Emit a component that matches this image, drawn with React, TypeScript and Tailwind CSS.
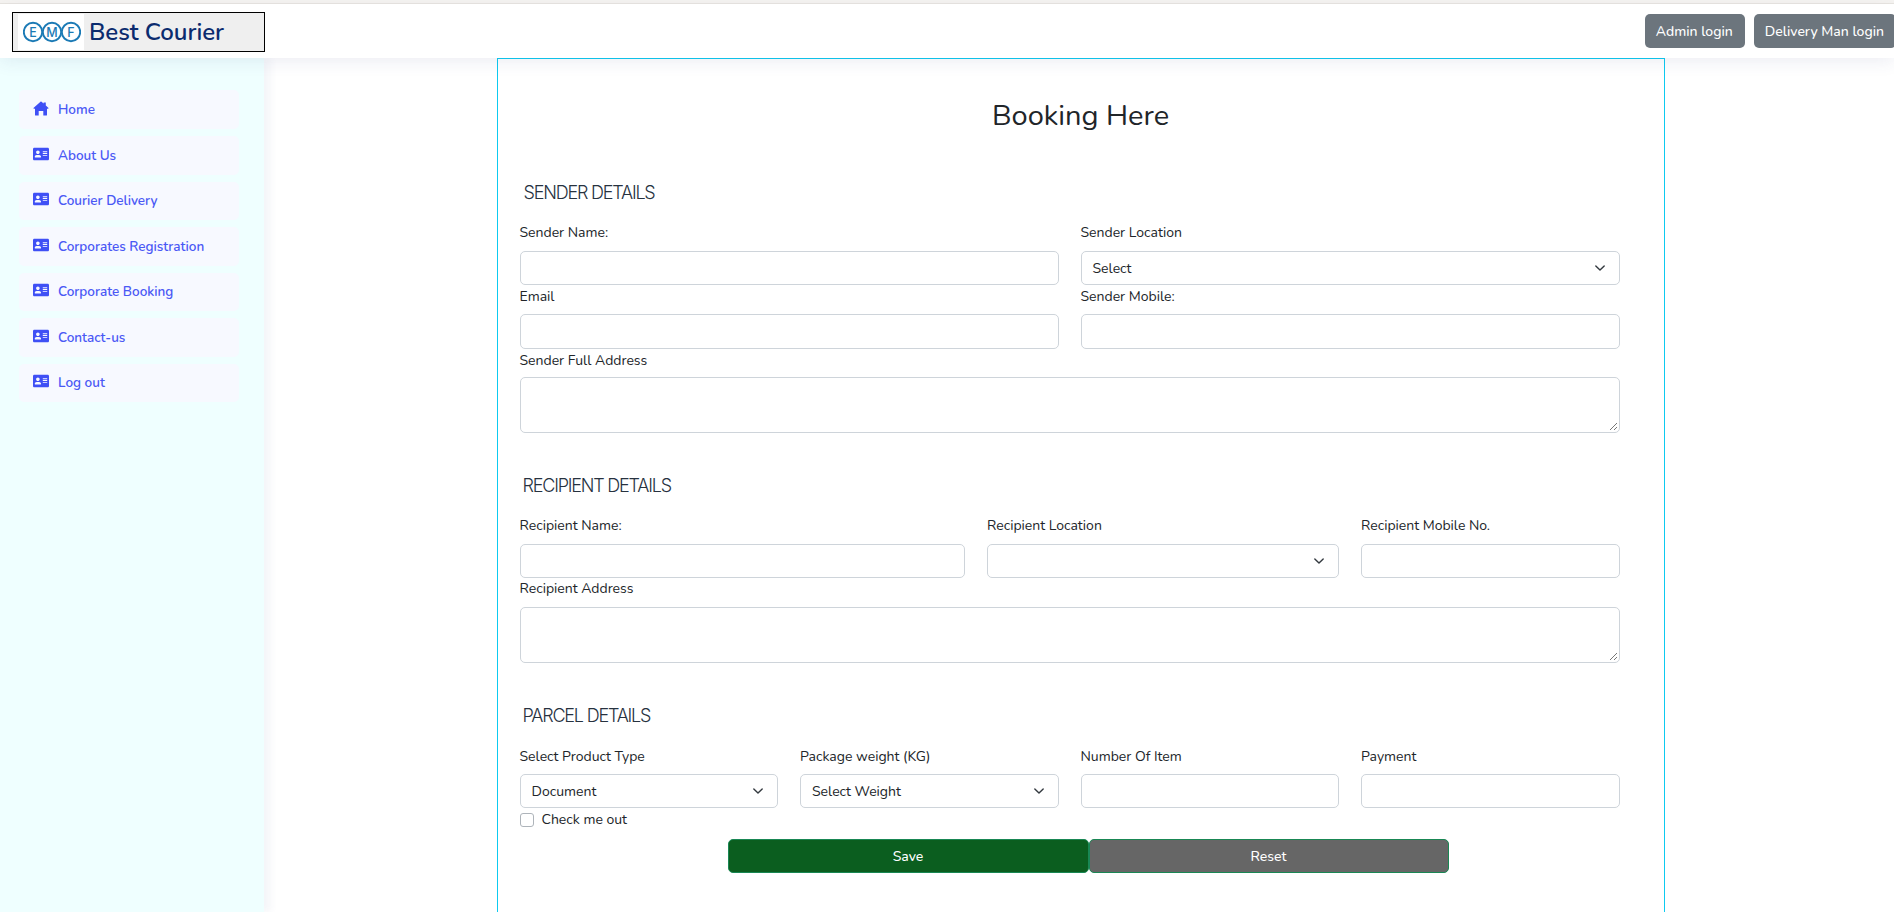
import { FaAddressCard } from "react-icons/fa";

const font = "font-['Nunito','Open_Sans','Noto_Sans',sans-serif]";
const menu = ["About Us", "Courier Delivery", "Corporates Registration", "Corporate Booking", "Contact-us", "Log out"];

function Chevron() {
  return (
    <svg viewBox="0 0 16 16" className="w-4 h-4 shrink-0 text-[#343a40]" fill="none" stroke="currentColor" strokeWidth="2" strokeLinecap="round" strokeLinejoin="round">
      <path d="M2 5l6 6 6-6" transform="translate(2.4 2.4) scale(.7)" />
    </svg>
  );
}

function HomeIcon() {
  return (
    <svg viewBox="0 0 16 15" className="w-4 h-[15px] shrink-0 -mt-[3px] mx-[1px] text-[#3f50f5]" fill="currentColor">
      <path d="M8 .6c.2 0 .4.1.5.2l2.1 1.8V1.4h2.2v3.1l2.5 2.2c.4.4.1 1-.4 1H14v6.2c0 .4-.3.7-.7.7h-3V10H5.7v4.6h-3c-.4 0-.7-.3-.7-.7V7.7H1.100c-.5 0-.8-.6-.4-1L7.500.8c.1-.1.3-.2.5-.2z" />
    </svg>
  );
}

function Label({ children, className = "" }: { children: string; className?: string }) {
  return <div className={`h-[19px] leading-[19px] text-[14px] text-[#212529] ${className}`}>{children}</div>;
}

const box = "w-full border border-[#ced4da] rounded-[5px] bg-white";

function Input({ className = "h-[34px]" }: { className?: string }) {
  return <div className={`${box} ${className}`} />;
}

function Select({ value = "" }: { value?: string }) {
  return (
    <div className={`${box} h-[34px] flex items-center justify-between pl-[11px] pr-[11px] text-[14px] text-[#212529]`}>
      <span>{value}</span>
      <Chevron />
    </div>
  );
}

function Area() {
  return (
    <div className={`${box} h-[56px] relative`}>
      <svg viewBox="0 0 10 10" className="absolute right-[1px] bottom-[1px] w-[10px] h-[10px] text-[#777]" stroke="currentColor" strokeWidth="1">
        <path d="M9 2L2 9M9 6L6 9" />
      </svg>
    </div>
  );
}

function Heading({ children, className = "" }: { children: string; className?: string }) {
  return (
    <h3 className={`font-['Inter',sans-serif] font-light text-[18px] leading-[20px] tracking-[-1.2px] text-[#27323f] uppercase ${className}`}>
      {children}
    </h3>
  );
}

export default function App() {
  return (
    <div className={`${font} h-screen overflow-hidden bg-white flex flex-col`}>
      <div className="h-[4px] bg-[#f6f4f1] border-b border-[#e8e5e0] shrink-0" />
      <header className="h-[54px] shrink-0 bg-white flex items-center justify-between pl-3 relative z-20 shadow-[0_4px_16px_rgba(60,70,130,0.09)]">
        <div className="w-[253px] h-[40px] mt-[1px] border border-black bg-[#efefef] flex items-center pl-[5px]">
          <div className="w-[66px] h-[36px] bg-white flex items-center justify-center shrink-0">
            <svg viewBox="0 0 58 22" className="w-[58px] h-[22px] ml-[2px]" fill="none" stroke="#1b7ab5" strokeWidth="1.9">
              <circle cx="10" cy="11" r="9.2" />
              <circle cx="29" cy="11" r="9.2" />
              <circle cx="48" cy="11" r="9.2" />
              <g fill="#1b7ab5" stroke="none" fontFamily="Inter, sans-serif" fontSize="12.5" fontWeight="500" textAnchor="middle">
                <text x="10" y="15.5">E</text>
                <text x="29" y="15.5">M</text>
                <text x="48" y="15.5">F</text>
              </g>
            </svg>
          </div>
          <span className="ml-[5px] text-[24px] leading-none font-semibold text-[#0b2b6e] whitespace-nowrap">Best Courier</span>
        </div>
        <div className="flex gap-[9px] -mr-[2px]">
          <div className="h-[34px] pl-[11px] pr-3 flex items-center rounded-[5px] bg-[#6c757d] text-white text-[14px] font-medium whitespace-nowrap">Admin login</div>
          <div className="h-[34px] pl-[11px] pr-3 flex items-center rounded-[5px] bg-[#6c757d] text-white text-[14px] font-medium whitespace-nowrap">Delivery Man login</div>
        </div>
      </header>
      <div className="flex flex-1 min-h-0">
        <aside className="w-[264px] shrink-0 bg-[#efffff] shadow-[7px_0_7px_rgba(60,70,130,0.05)] pt-[32px] pl-[19px] relative z-10">
          <nav className="w-[220px] flex flex-col gap-[7px]">
            <a className="h-[39px] rounded-[5px] bg-[#f7f9ff] flex items-center pl-[13px] gap-[8px] text-[13.5px] font-semibold text-[#4a58f5]">
              <HomeIcon />
              <span className="mt-[1px]">Home</span>
            </a>
            {menu.map((m) => (
              <a key={m} className="h-[38.5px] rounded-[5px] bg-[#f7f9ff] flex items-center pl-[13px] gap-[8px] text-[13.5px] font-semibold text-[#4a58f5] whitespace-nowrap">
                <FaAddressCard className="w-4 h-4 mx-[1px] -mt-[3px] text-[#3f50f5]" />
                <span className="mt-[1px]">{m}</span>
              </a>
            ))}
          </nav>
        </aside>
        <main className="flex-1 flex justify-center">
          <section className="w-[1168px] h-[900px] border border-[#0dcaf0] pl-[22px] pr-[44px] shrink-0 ml-[3px]">
            <h1 className="mt-[37px] text-center text-[29px] leading-[40px] text-[#212529] font-normal pl-[22px]">Booking Here</h1>

            <Heading className="mt-[47px] ml-1">Sender Details</Heading>
            <div className="grid grid-cols-12 gap-x-[22px] mt-[20px]">
              <div className="col-span-6"><Label className="mb-[9px]">Sender Name:</Label><Input /></div>
              <div className="col-span-6"><Label className="mb-[9px]">Sender Location</Label><Select value="Select" /></div>
              <div className="col-span-6 mt-[2px]"><Label className="mb-[8px]">Email</Label><Input className="h-[35px]" /></div>
              <div className="col-span-6 mt-[2px]"><Label className="mb-[8px]">Sender Mobile:</Label><Input className="h-[35px]" /></div>
              <div className="col-span-12 mt-[2px]"><Label className="mb-[7px]">Sender Full Address</Label><Area /></div>
            </div>

            <Heading className="mt-[43px] ml-[3px]">Recipient Details</Heading>
            <div className="grid grid-cols-12 gap-x-[22px] mt-[20px]">
              <div className="col-span-5"><Label className="mb-[9px]">Recipient Name:</Label><Input /></div>
              <div className="col-span-4"><Label className="mb-[9px]">Recipient Location</Label><Select /></div>
              <div className="col-span-3"><Label className="mb-[9px]">Recipient Mobile No.</Label><Input /></div>
              <div className="col-span-12 mt-[1px]"><Label className="mb-[9px]">Recipient Address</Label><Area /></div>
            </div>

            <Heading className="mt-[43px] ml-[3px]">Parcel Details</Heading>
            <div className="grid grid-cols-12 gap-x-[22px] mt-[21px]">
              <div className="col-span-3"><Label className="mb-[8px]">Select Product Type</Label><Select value="Document" /></div>
              <div className="col-span-3"><Label className="mb-[8px]">Package weight (KG)</Label><Select value="Select Weight" /></div>
              <div className="col-span-3"><Label className="mb-[8px]">Number Of Item</Label><Input /></div>
              <div className="col-span-3"><Label className="mb-[8px]">Payment</Label><Input /></div>
            </div>
            <div className="flex items-center gap-2 mt-[2px] h-[19px]">
              <div className="w-[14px] h-[14px] border border-[#aeb4ba] rounded-[3px] bg-white" />
              <span className="text-[14px] text-[#212529]">Check me out</span>
            </div>
            <div className="flex justify-center mt-[10px] pl-[37px]">
              <div className="w-[361px] h-[34px] rounded-[5px] bg-[#0b5e1f] border border-[#198754] flex items-center justify-center text-white text-[14px] font-medium">Save</div>
              <div className="w-[360px] h-[34px] rounded-[5px] bg-[#666666] border border-[#198754] flex items-center justify-center text-white text-[14px] font-medium">Reset</div>
            </div>
          </section>
        </main>
      </div>
    </div>
  );
}
